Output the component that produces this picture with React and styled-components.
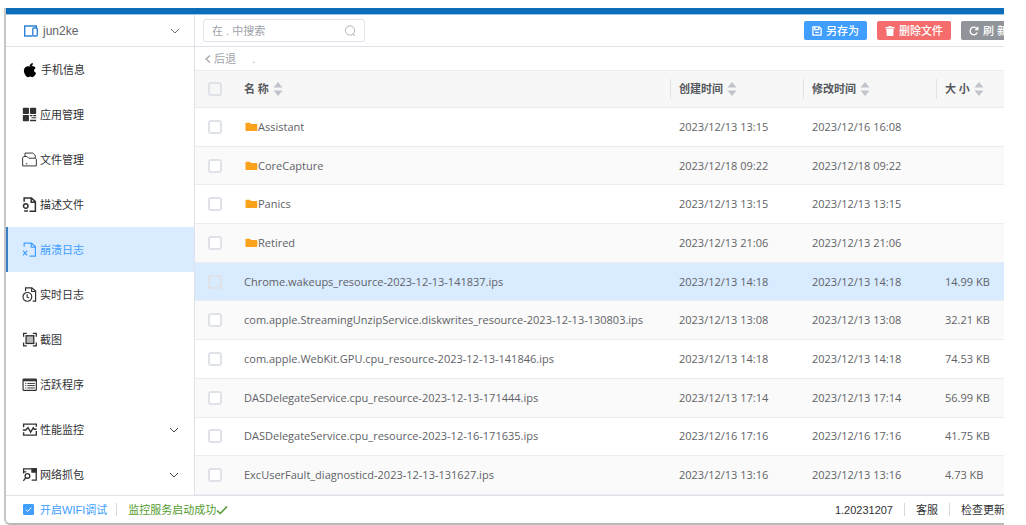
import React, { useState } from 'react';
import styled, { createGlobalStyle, ThemeProvider } from 'styled-components';

const theme = {
  bar: '#0c6dbb',
  primary: '#409eff',
  danger: '#f56c6c',
  info: '#909399',
  line: '#dfe2e9',
  rowLine: '#ebecef',
  active: '#d9ebff',
  sans: '"Liberation Sans", "Noto Sans CJK SC", sans-serif',
  tableFont: '"Open Sans", "Noto Sans CJK SC", sans-serif',
};

const GlobalStyle = createGlobalStyle`
  *, *::before, *::after {
    box-sizing: border-box;
  }
  body {
    margin: 0;
    background: #fff;
  }
  button, input {
    font: inherit;
    color: inherit;
  }
`;

const Frame = styled.div`
  margin: 8px 22px 0 4px;
  overflow: hidden;
  border-left: 2px solid #c6c6c6;
  border-bottom: 2px solid #b9b9b9;
  border-bottom-left-radius: 6px;
  font-family: ${(p) => p.theme.sans};
  font-size: 11px;
  line-height: 16px;
  color: #303133;
`;
const Inner = styled.div`
  margin-right: -20px;
`;
const TitleBar = styled.div`
  height: 7px;
  background: ${(p) => p.theme.bar};
  border-bottom: 1px solid #9cc6e6;
`;
const Body = styled.div`
  display: flex;
`;
const Sidebar = styled.aside`
  flex: 0 0 189px;
  border-right: 1px solid ${(p) => p.theme.line};
`;
const DevicePicker = styled.button`
  display: flex;
  align-items: center;
  gap: 4px;
  width: 100%;
  height: 32px;
  padding: 0 14px 0 17px;
  border: 0;
  border-bottom: 1px solid ${(p) => p.theme.line};
  background: #fff;
  font-size: 12px;
  color: #606266;
  span {
    flex: 1;
    text-align: left;
  }
`;
const Menu = styled.nav`
  height: 448px;
  overflow: hidden;
`;
const MenuItem = styled.a`
  display: flex;
  align-items: center;
  gap: 3px;
  height: 45px;
  padding: 0 15px 0 14px;
  border-left: 2px solid ${(p) => (p.$active ? '#3a7fc6' : 'transparent')};
  background: ${(p) => (p.$active ? p.theme.active : '#fff')};
  color: ${(p) => (p.$active ? p.theme.primary : '#303133')};
  text-decoration: none;
  span {
    flex: 1;
  }
`;
const Main = styled.main`
  flex: 1;
  min-width: 0;
`;
const Toolbar = styled.div`
  display: flex;
  align-items: center;
  justify-content: space-between;
  height: 32px;
  padding: 0 8px;
  border-bottom: 1px solid ${(p) => p.theme.line};
`;
const SearchBox = styled.label`
  display: flex;
  align-items: center;
  width: 162px;
  height: 23px;
  padding: 0 8px;
  border: 1px solid ${(p) => p.theme.line};
  border-radius: 3px;
  color: #a8abb2;
  input {
    flex: 1;
    min-width: 0;
    padding: 0;
    border: 0;
    outline: 0;
    background: none;
  }
  input::placeholder {
    color: #a0a3a9;
    opacity: 1;
  }
`;
const Actions = styled.div`
  display: flex;
  gap: 10px;
`;
const ActionButton = styled.button`
  display: flex;
  align-items: center;
  gap: 4px;
  height: 19px;
  padding: 0 8px;
  border: 0;
  border-radius: 2px;
  background: ${(p) => p.theme[p.$kind]};
  color: #fff;
  font-weight: 500;
  white-space: pre;
`;
const Crumbs = styled.div`
  display: flex;
  align-items: center;
  gap: 16px;
  height: 23px;
  padding-left: 9px;
  color: #a0a3a9;
`;
const BackButton = styled.button`
  display: flex;
  align-items: center;
  gap: 2px;
  padding: 0;
  border: 0;
  background: none;
`;
const Table = styled.table`
  width: 100%;
  height: 425px;
  table-layout: fixed;
  border-collapse: separate;
  border-spacing: 0;
  font-family: ${(p) => p.theme.tableFont};
  color: #606266;
  th, td {
    padding: 0 0 0 8px;
    border-bottom: 1px solid ${(p) => p.theme.rowLine};
    text-align: left;
    white-space: nowrap;
  }
  th {
    border-top: 1px solid ${(p) => p.theme.rowLine};
    background: #f7f7f7;
    color: #55585d;
  }
  th:first-child, td:first-child {
    padding-left: 13px;
  }
`;
const CheckCol = styled.col`
  width: 41px;
`;
const TimeCol = styled.col`
  width: 133px;
`;
const SizeCol = styled.col`
  width: 87px;
`;
const Row = styled.tr`
  height: 38px;
  background: ${(p) => (p.$selected ? p.theme.active : '#fff')};
  &:nth-child(even) {
    background: #fafafa;
  }
`;
const HeadCell = styled.div`
  display: flex;
  align-items: center;
  gap: 4px;
  height: 20px;
  border-right: ${(p) => (p.$last ? 0 : 1)}px solid ${(p) => p.theme.line};
`;
const SortButton = styled.button`
  display: flex;
  padding: 0;
  border: 0;
  background: none;
`;
const FileName = styled.span`
  display: flex;
  align-items: center;
  svg {
    margin-left: 1px;
  }
`;
const Check = styled.input`
  display: block;
  appearance: none;
  width: 14px;
  height: 14px;
  margin: 0;
  border: 2px solid ${(p) => p.theme.line};
  border-radius: 3px;
  background: ${(p) => (p.$plain ? 'transparent' : '#fff')};
  &:checked {
    background: ${(p) => p.theme.primary};
  }
`;
const Footer = styled.footer`
  display: flex;
  align-items: center;
  justify-content: space-between;
  height: 28px;
  padding: 0 19px 0 17px;
  border-top: 1px solid ${(p) => p.theme.line};
`;
const FooterGroup = styled.div`
  display: flex;
  align-items: center;
  > * + * {
    margin-left: 11px;
    padding-left: 11px;
    border-left: 1px solid #d5d8de;
  }
  a {
    color: inherit;
    text-decoration: none;
  }
`;
const FooterItem = styled.span`
  display: flex;
  align-items: center;
  height: 13px;
  color: ${(p) => (p.$ok ? '#529b2e' : 'inherit')};
`;
const WifiLabel = styled.label`
  display: flex;
  align-items: center;
  gap: 6px;
  height: 13px;
  margin-right: -2px;
  color: ${(p) => p.theme.primary};
`;
const WifiCheck = styled.input`
  width: 11px;
  height: 11px;
  margin: 0;
  appearance: none;
  border: 1px solid ${(p) => p.theme.primary};
  border-radius: 1px;
  &:checked {
    background: ${(p) => p.theme.primary}
      url("data:image/svg+xml,%3Csvg xmlns='http://www.w3.org/2000/svg' viewBox='0 0 9 9'%3E%3Cpath d='M1.8 4.6l1.9 1.8 3.5-3.8' fill='none' stroke='white'/%3E%3C/svg%3E");
  }
`;

const Icon = ({ size = 15, box = 14, children, ...rest }) => (
  <svg
    width={size}
    height={size}
    viewBox={`0 0 ${box} ${box}`}
    fill="none"
    stroke="currentColor"
    strokeWidth="1.1"
    aria-hidden="true"
    {...rest}
  >
    {children}
  </svg>
);

const Chevron = () => (
  <Icon size={10} box={10} strokeWidth="0.9"><path d="M1 3l4 4 4-4" /></Icon>
);

// page with a folded corner, open at the lower left where the badge goes
const PAGE = 'M2 4.5V1h6.800l3.700 3.300v8.900H7M8.600 1v3.800h3.900';

const icons = {
  phone: (
    <Icon size={16} box={24} stroke="none" fill="#000">
      <path d="M17.1 12.7c0-2.4 2-3.6 2.100-3.700-1.100-1.700-2.900-1.900-3.500-1.900-1.500-.2-2.900.9-3.700.9-.8 0-1.900-.9-3.200-.8-1.600 0-3.100.9-4 2.400-1.700 3-.4 7.300 1.200 9.700.8 1.200 1.800 2.500 3.100 2.400 1.200 0 1.700-.8 3.200-.8s1.900.8 3.200.8c1.300 0 2.200-1.200 3-2.300.9-1.300 1.300-2.600 1.300-2.700 0 0-2.700-1-2.700-4z" stroke="#000" strokeWidth="2" />
      <path d="M14.800 5.300c.7-.8 1.100-2 1-3.100-1 0-2.200.7-2.900 1.500-.6.7-1.200 1.900-1 3 1.100.1 2.200-.6 2.900-1.400z" stroke="#000" />
    </Icon>
  ),
  apps: (
    <Icon stroke="none" fill="currentColor">
      <rect x="0.800" y="0.800" width="5.700" height="5.700" rx="0.700" />
      <rect x="7.500" y="0.800" width="5.700" height="5.700" rx="0.700" />
      <rect x="0.800" y="7.500" width="5.700" height="5.700" rx="0.700" />
      <path d="M7.500 7.500h2.200v1.200H7.500zM10.500 7.500h2.700v1.200h-2.700zM8.800 9.600h4.400v1H8.800zM7.500 12h5.700v1.200H7.500z" />
    </Icon>
  ),
  files: (
    <Icon strokeWidth="0.9">
      <path d="M.6 13V5.200l1.200-1h3l1.500 1.600h6.200l.9.900V13zM2.800 4V1h7.200l2.400 2.200v2.500M3.500 11h1.500" />
    </Icon>
  ),
  profile: (
    <Icon strokeWidth="1.400">
      <path d={PAGE} />
      <circle cx="3.500" cy="8.300" r="2.100" />
      <path d="M2 13h3.500" />
    </Icon>
  ),
  crash: (
    <Icon>
      <path d={PAGE} />
      <path d="M1 8l3.800 4.500M4.800 8L1 12.500" />
    </Icon>
  ),
  live: (
    <Icon>
      <path d="M3.300 4V.8h5.900l3.500 3v9.400H10M9 .8v3.400h3.700" />
      <circle cx="5" cy="9.200" r="4.100" />
      <path d="M4.800 6.800v2.700l1.900.8" />
    </Icon>
  ),
  capture: (
    <Icon strokeWidth="1.200">
      <path d="M1.500 4.500V1.200h3M10.100 1.200h3.200v3.300M13.300 9.800v3.200h-3.200M4.500 13h-3V9.800" />
      <rect x="3.800" y="3.500" width="7.200" height="7.200" fill="#b9b9b9" />
    </Icon>
  ),
  active: (
    <Icon>
      <rect x="1" y="2" width="12.400" height="10.400" rx="0.500" />
      <path d="M1 3h12.400" strokeWidth="2" />
      <path d="M3 6h1M5 6h7M3 8h1M5 8h7M3 10.200h1M5 10.200h7" strokeWidth="0.900" />
    </Icon>
  ),
  monitor: (
    <Icon strokeWidth="1.300">
      <path d="M1.500 5V2h11.900v2.500M.8 7.500h2.800l2-2.300 2.500 4.200 2.400-4 1 1.300h2.200M1.500 9.500v2.700h11.900V8.500" />
    </Icon>
  ),
  capturePack: (
    <Icon strokeWidth="1.200">
      <path d="M1.500 6V1.700h11.800v10.600H9M1.500 4.500H4" />
      <path d="M9.300 1.700h4v3h-4z" fill="currentColor" />
      <circle cx="5.100" cy="8.300" r="2.200" />
      <path d="M3.500 10l-2.200 3" />
    </Icon>
  ),
};

const menu = [
  { key: 'phone', label: '手机信息' },
  { key: 'apps', label: '应用管理' },
  { key: 'files', label: '文件管理' },
  { key: 'profile', label: '描述文件' },
  { key: 'crash', label: '崩溃日志' },
  { key: 'live', label: '实时日志' },
  { key: 'capture', label: '截图' },
  { key: 'active', label: '活跃程序' },
  { key: 'monitor', label: '性能监控', sub: true },
  { key: 'capturePack', label: '网络抓包', sub: true },
];

const files = [
  { name: 'Assistant', folder: true, created: '2023/12/13 13:15', modified: '2023/12/16 16:08' },
  { name: 'CoreCapture', folder: true, created: '2023/12/18 09:22', modified: '2023/12/18 09:22' },
  { name: 'Panics', folder: true, created: '2023/12/13 13:15', modified: '2023/12/13 13:15' },
  { name: 'Retired', folder: true, created: '2023/12/13 21:06', modified: '2023/12/13 21:06' },
  { name: 'Chrome.wakeups_resource-2023-12-13-141837.ips', created: '2023/12/13 14:18', modified: '2023/12/13 14:18', size: '14.99 KB' },
  { name: 'com.apple.StreamingUnzipService.diskwrites_resource-2023-12-13-130803.ips', created: '2023/12/13 13:08', modified: '2023/12/13 13:08', size: '32.21 KB' },
  { name: 'com.apple.WebKit.GPU.cpu_resource-2023-12-13-141846.ips', created: '2023/12/13 14:18', modified: '2023/12/13 14:18', size: '74.53 KB' },
  { name: 'DASDelegateService.cpu_resource-2023-12-13-171444.ips', created: '2023/12/13 17:14', modified: '2023/12/13 17:14', size: '56.99 KB' },
  { name: 'DASDelegateService.cpu_resource-2023-12-16-171635.ips', created: '2023/12/16 17:16', modified: '2023/12/16 17:16', size: '41.75 KB' },
  { name: 'ExcUserFault_diagnosticd-2023-12-13-131627.ips', created: '2023/12/13 13:16', modified: '2023/12/13 13:16', size: '4.73 KB' },
];

const Heading = ({ label, last = false }) => (
  <th scope="col">
    <HeadCell $last={last}>
      {label}
      <SortButton type="button" aria-label={label}>
        <svg width="10" height="14" viewBox="0 0 10 14" fill="#c0c4cc" aria-hidden="true">
          <path d="M5 0l4.500 5.500h-9zM5 14L.5 8.500h9z" />
        </svg>
      </SortButton>
    </HeadCell>
  </th>
);

const App = () => {
  const [current, setCurrent] = useState('crash');
  const [selected, setSelected] = useState(4);
  return (
    <ThemeProvider theme={theme}>
      <GlobalStyle />
      <Frame>
        <Inner>
          <TitleBar />
          <Body>
            <Sidebar>
              <DevicePicker type="button">
                <Icon size={16} box={16} stroke="#2f83d6" strokeWidth="1.400">
                  <path d="M9.500 13H1.700V3h11.600v2" />
                  <rect x="9.800" y="5" width="4.500" height="8" rx="1" />
                </Icon>
                <span>jun2ke</span>
                <Chevron />
              </DevicePicker>
              <Menu>
                {menu.map((m) => (
                  <MenuItem
                    key={m.key}
                    href={`#${m.key}`}
                    $active={m.key === current}
                    onClick={() => setCurrent(m.key)}
                  >
                    {icons[m.key]}
                    <span>{m.label}</span>
                    {m.sub && <Chevron />}
                  </MenuItem>
                ))}
              </Menu>
            </Sidebar>
            <Main>
              <Toolbar>
                <SearchBox>
                  <input type="text" placeholder="在 . 中搜索" aria-label="在 . 中搜索" />
                  <Icon size={12} box={12} strokeWidth="0.900">
                    <circle cx="6" cy="5.500" r="4.600" />
                    <path d="M9 9l2 2" />
                  </Icon>
                </SearchBox>
                <Actions>
                  <ActionButton type="button" $kind="primary">
                    <Icon size={10} box={9} strokeWidth="1.200">
                      <path d="M.8.8h5.700l1.700 1.700v5.700H.8zM2.500.8v2.400h3.500V.8M2.800 5.800h3.400" />
                    </Icon>
                    另存为
                  </ActionButton>
                  <ActionButton type="button" $kind="danger">
                    <Icon size={10} box={10} stroke="none" fill="#fff">
                      <path d="M3.500 0h3v1H9.500v1.500h-9V1h3zM1.300 3h7.400l-.5 7H1.800z" />
                    </Icon>
                    删除文件
                  </ActionButton>
                  <ActionButton type="button" $kind="info">
                    <Icon size={10} box={10} strokeWidth="1.300">
                      <path d="M8.400 6.500A3.800 3.800 0 1 1 8 2.700M8.800.8v2.800H6" />
                    </Icon>
                    刷 新
                  </ActionButton>
                </Actions>
              </Toolbar>
              <Crumbs>
                <BackButton type="button">
                  <Icon size={8} box={8} strokeWidth="1.200"><path d="M6 .5L2 4l4 3.500" /></Icon>
                  后退
                </BackButton>
                <span>.</span>
              </Crumbs>
              <Table>
                <colgroup>
                  <CheckCol />
                  <col />
                  <TimeCol />
                  <TimeCol />
                  <SizeCol />
                </colgroup>
                <thead>
                  <Row>
                    <th><Check type="checkbox" aria-label="全选" $plain /></th>
                    <Heading label="名 称" />
                    <Heading label="创建时间" />
                    <Heading label="修改时间" />
                    <Heading label="大 小" last />
                  </Row>
                </thead>
                <tbody>
                  {files.map((f, i) => (
                    <Row key={f.name} $selected={i === selected} onClick={() => setSelected(i)}>
                      <td><Check type="checkbox" aria-label={f.name} $plain={i === selected} /></td>
                      <td>
                        <FileName>
                          {f.folder && (
                            <svg width="13" height="10" viewBox="0 0 13 10" fill="#faa21b" aria-hidden="true">
                              <path d="M.5 1.500a.8.8 0 0 1 .8-.8h3.500l1.300 1.300h5.400a.8.8 0 0 1 .8.8v5.400a.8.8 0 0 1-.8.8H1.300a.8.8 0 0 1-.8-.8z" />
                            </svg>
                          )}
                          {f.name}
                        </FileName>
                      </td>
                      <td>{f.created}</td>
                      <td>{f.modified}</td>
                      <td>{f.size}</td>
                    </Row>
                  ))}
                </tbody>
              </Table>
            </Main>
          </Body>
          <Footer>
            <FooterGroup>
              <WifiLabel>
                <WifiCheck type="checkbox" defaultChecked />
                开启WIFI调试
              </WifiLabel>
              <FooterItem $ok>
                监控服务启动成功
                <Icon size={12} box={12} strokeWidth="1.600"><path d="M1 6.500l3.300 3L11 2.500" /></Icon>
              </FooterItem>
            </FooterGroup>
            <FooterGroup>
              <FooterItem>1.20231207</FooterItem>
              <FooterItem><a href="#service">客服</a></FooterItem>
              <FooterItem><a href="#update">检查更新</a></FooterItem>
            </FooterGroup>
          </Footer>
        </Inner>
      </Frame>
    </ThemeProvider>
  );
};

export default App;
